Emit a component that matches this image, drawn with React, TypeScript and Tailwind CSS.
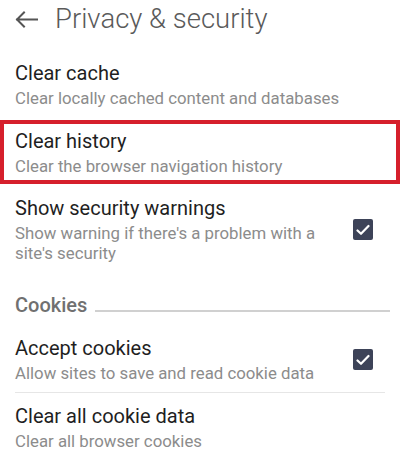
import React from 'react';

const font = { fontFamily: 'Roboto, "Noto Sans", sans-serif' };

function CheckBox() {
  return (
    <div className="flex h-[21px] w-[20px] shrink-0 items-center justify-center rounded-[2px] bg-[#3d4358]">
      <svg width="14" height="12" viewBox="0 0 14 12" fill="none">
        <path d="M1.5 6.5 L5 9.8 L12.5 2" stroke="#fff" strokeWidth="2.2" strokeLinecap="round" strokeLinejoin="round" />
      </svg>
    </div>
  );
}

function Row({ title, sub, checked }: { title: string; sub: React.ReactNode; checked?: boolean }) {
  return (
    <div className="flex items-center gap-4">
      <div className="flex-1">
        <div className="text-[20px] leading-[24px] text-[#1f1f1f]">{title}</div>
        <div className="mt-[3px] text-[16.8px] leading-[20px] text-[#8c8c8c]">{sub}</div>
      </div>
      {checked && <CheckBox />}
    </div>
  );
}

export default function App() {
  return (
    <div className="h-[461px] w-[400px] overflow-hidden bg-white" style={font}>
      {/* header */}
      <div className="flex h-[51px] items-start pt-[3px]">
        <div className="flex h-[32px] w-[55px] items-center pl-[15px]">
          <svg width="23" height="17" viewBox="0 0 23 17" fill="none">
            <path d="M22 8.5 H2 M9 1.5 L2 8.5 L9 15.5" stroke="#555" strokeWidth="2" strokeLinecap="square" />
          </svg>
        </div>
        <h1 className="text-[27.5px] font-light leading-[32px] text-[#5a5a5a]">Privacy &amp; security</h1>
      </div>

      <div className="px-[15px] pt-[10px] pb-[12px]">
        <Row title="Clear cache" sub="Clear locally cached content and databases" />
      </div>

      <div className="border-[4px] border-[#d61f2c] pt-[5px] pb-[4px] pl-[11px] pr-[11px]">
        <Row title="Clear history" sub="Clear the browser navigation history" />
      </div>

      <div className="pt-[12px] pl-[15px] pr-[27px]">
        <Row
          title="Show security warnings"
          sub={<>Show warning if there's a problem with a<br />site's security</>}
          checked
        />
      </div>

      <div className="mt-[30px] flex items-baseline gap-[8px] pl-[15px] pr-[10px]">
        <div className="text-[20px] font-medium leading-[24px] text-[#707070]">Cookies</div>
        <div className="h-[2px] flex-1 bg-[#d0d0d0]" />
      </div>

      <div className="mt-[19px] pl-[15px] pr-[27px]">
        <Row title="Accept cookies" sub="Allow sites to save and read cookie data" checked />
      </div>

      <div className="mx-[15px] mt-[9px] h-[1px] bg-[#e6e6e6]" />

      <div className="mt-[11px] pl-[15px] pr-[27px]">
        <Row title="Clear all cookie data" sub="Clear all browser cookies" />
      </div>
    </div>
  );
}
